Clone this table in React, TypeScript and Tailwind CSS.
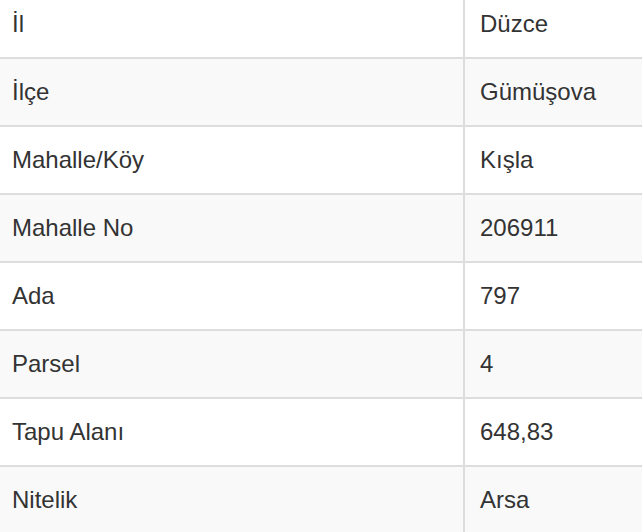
const rows: { label: string; value: string }[] = [
  { label: 'İl', value: 'Düzce' },
  { label: 'İlçe', value: 'Gümüşova' },
  { label: 'Mahalle/Köy', value: 'Kışla' },
  { label: 'Mahalle No', value: '206911' },
  { label: 'Ada', value: '797' },
  { label: 'Parsel', value: '4' },
  { label: 'Tapu Alanı', value: '648,83' },
  { label: 'Nitelik', value: 'Arsa' },
];

export default function App() {
  return (
    <div className="h-[532px] w-[642px] overflow-hidden bg-white">
      {/* tablo üstten kırpılmış görünüyor */}
      <div className="-mt-[9px] font-['Liberation_Sans',Arial,sans-serif] text-[24px] text-[#333]">
        {rows.map((r, i) => (
          <div
            key={r.label}
            className={`grid h-[68px] grid-cols-[463px_1fr] border-b-2 border-[#ddd] ${
              i % 2 === 1 ? 'bg-[#f9f9f9]' : 'bg-white'
            }`}
          >
            <div className="flex items-center pl-[12px]">{r.label}</div>
            <div className="flex items-center border-l-2 border-[#ddd] pl-[15px]">{r.value}</div>
          </div>
        ))}
      </div>
    </div>
  );
}
